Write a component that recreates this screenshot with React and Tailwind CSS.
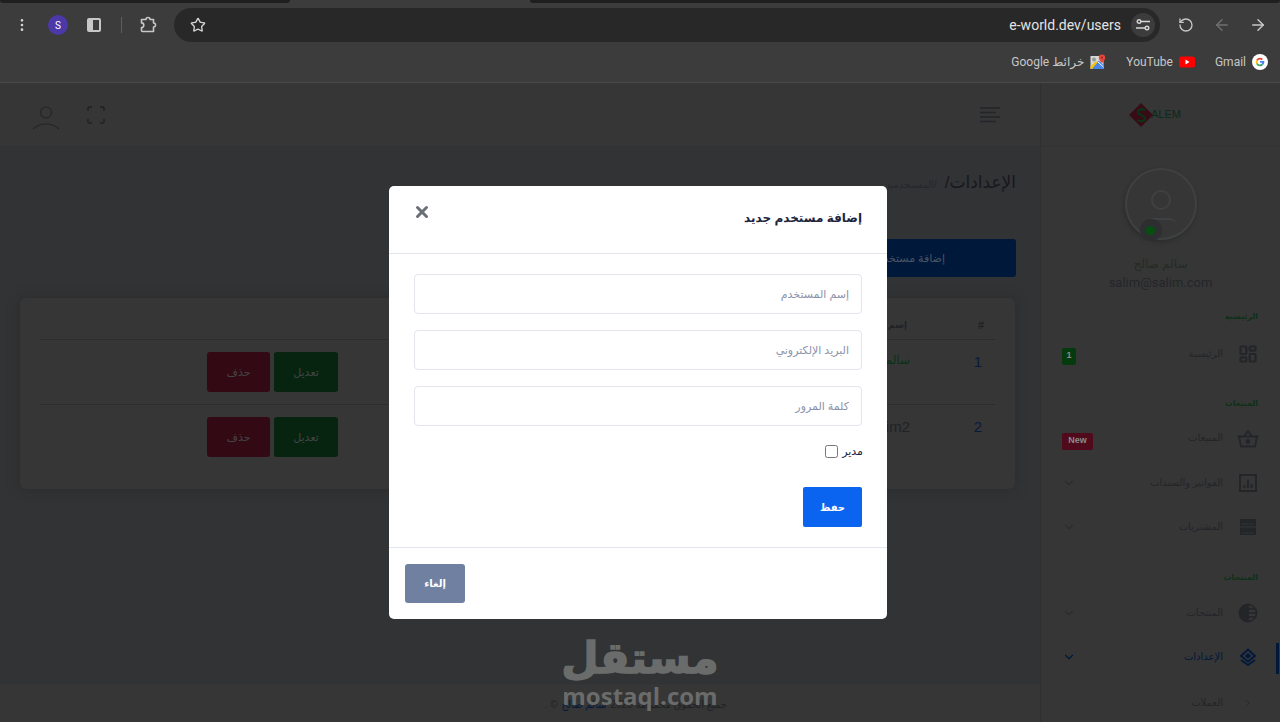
import {
    ArrowLeft,
    ArrowRight,
    ChevronDown,
    ChevronRight,
    EllipsisVertical,
    LayoutDashboard,
    RotateCcw,
    Star,
    X,
} from "lucide-react";

const ChromeBtn = ({ children }) => (
    <div className="w-9 h-9 flex items-center justify-center shrink-0">{children}</div>
);

const SidePanelIcon = () => (
    <svg width="16" height="16" viewBox="0 0 16 16">
        <rect x="1" y="1" width="14" height="14" rx="2" fill="#c7c7c7" />
        <rect x="7" y="3" width="6" height="10" fill="#3c3c3c" />
    </svg>
);

const PuzzleIcon = () => (
    <svg width="18" height="18" viewBox="0 0 18 18" fill="none" stroke="#c7c7c7" strokeWidth="1.6" strokeLinejoin="round">
        <path d="M2.500 3.500H7a2 2 0 0 1 4 0h3.500V7a2 2 0 0 1 0 4v4.500H3.500a1 1 0 0 1-1-1V11.500a2.300 2.300 0 0 0 0-4.600z" />
    </svg>
);

const TuneIcon = () => (
    <svg width="14" height="12" viewBox="0 0 14 12" fill="none" stroke="#d5d5d5" strokeWidth="1.4">
        <circle cx="3" cy="2.500" r="1.800" />
        <path d="M5 2.500h9M0 9h9" />
        <circle cx="11" cy="9" r="1.800" />
    </svg>
);

const GoogleIcon = () => (
    <svg width="16" height="16" viewBox="0 0 16 16">
        <circle cx="8" cy="8" r="8" fill="#fff" />
        <path d="M5 6.400A3.400 3.400 0 0 1 8 4.600a3.400 3.400 0 0 1 2.300.9" stroke="#ea4335" strokeWidth="1.800" fill="none" />
        <path d="M5 9.600a3.400 3.400 0 0 1 0-3.200" stroke="#fbbc05" strokeWidth="1.800" fill="none" />
        <path d="M10.400 10.400A3.400 3.400 0 0 1 5 9.600" stroke="#34a853" strokeWidth="1.800" fill="none" />
        <path d="M8 7.900h3.400a3.400 3.400 0 0 1-1 2.500" stroke="#4285f4" strokeWidth="1.800" fill="none" />
    </svg>
);

const YoutubeIcon = () => (
    <svg width="16" height="12" viewBox="0 0 16 12">
        <rect width="16" height="11" y="0.500" rx="2.500" fill="#ff0000" />
        <path d="M6.500 3.500 10.500 6l-4 2.500z" fill="#fff" />
    </svg>
);

const MapsIcon = () => (
    <svg width="16" height="16" viewBox="0 0 16 16">
        <rect x="0.500" y="2" width="13" height="13" fill="#d8d8d0" />
        <path d="M0.500 15 9 6.500l4.500 4.500V15z" fill="#4a86e8" />
        <path d="M0.500 12.500 6 7 7.500 8.500 2 15H0.500z" fill="#f4c20d" />
        <path d="M8 8 13.500 13" stroke="#fff" strokeWidth="1" />
        <circle cx="4" cy="5.500" r="2" fill="#8f9aa0" />
        <path d="M12 0.500a3.200 3.200 0 0 1 3.200 3.200C15.200 6 12 9 12 9S8.800 6 8.800 3.700A3.200 3.200 0 0 1 12 .5z" fill="#e8453c" />
        <circle cx="12" cy="3.700" r="1.100" fill="#9c2b25" />
    </svg>
);

const Bookmark = ({ icon, label }) => (
    <div className="flex items-center gap-[6px] text-[12px] text-[#c7c7c7] font-['Roboto','DejaVu_Sans',sans-serif]">
        {icon}
        <span>{label}</span>
    </div>
);

const BrowserBar = () => (
    <div className="bg-[#3c3c3c] h-[83px] border-b border-[#4a4a4a] shrink-0 flex flex-col">
        <div className="flex h-[3px]" dir="ltr">
            <div className="w-[290px] bg-[#1f1f1f] rounded-b-md" />
            <div className="w-[240px]" />
            <div className="flex-1 bg-[#1f1f1f] rounded-b-md" />
        </div>
        <div className="flex items-center h-[44px] px-1">
            <ChromeBtn><ArrowRight size={18} color="#c7c7c7" /></ChromeBtn>
            <ChromeBtn><ArrowLeft size={18} color="#6f6f6f" /></ChromeBtn>
            <ChromeBtn><RotateCcw size={16} color="#c7c7c7" /></ChromeBtn>
            <div className="w-[986px] h-[34px] mx-2 rounded-full bg-[#282828] flex items-center shrink-0">
                <div className="w-[24px] h-[24px] mr-[5px] rounded-full bg-[#3c3c3c] flex items-center justify-center">
                    <TuneIcon />
                </div>
                <span dir="ltr" className="mr-[10px] text-[14px] text-[#e3e3e3] font-['Roboto',sans-serif]">e-world.dev/users</span>
                <Star size={16} color="#d5d5d5" strokeWidth={2} className="mr-auto ml-[16px]" />
            </div>
            <ChromeBtn><PuzzleIcon /></ChromeBtn>
            <div className="w-[18px] flex justify-center"><div className="w-px h-4 bg-[#5e5e5e]" /></div>
            <ChromeBtn><SidePanelIcon /></ChromeBtn>
            <ChromeBtn>
                <div className="w-5 h-5 rounded-full bg-[#4c38a8] text-white text-[10px] flex items-center justify-center font-['Roboto',sans-serif]">S</div>
            </ChromeBtn>
            <ChromeBtn><EllipsisVertical size={16} color="#d5d5d5" /></ChromeBtn>
        </div>
        <div className="flex items-center gap-5 pr-[12px] h-[30px]">
            <Bookmark icon={<GoogleIcon />} label="Gmail" />
            <Bookmark icon={<YoutubeIcon />} label="YouTube" />
            <Bookmark icon={<MapsIcon />} label="خرائط Google" />
        </div>
    </div>
);

const BasicIcon = ({ type }) => {
    if (type === "dashboard") return <LayoutDashboard size={20} color="#232529" strokeWidth={2.6} />;
    if (type === "basket")
        return (
            <svg width="22" height="18" viewBox="0 0 22 18" fill="none" stroke="#232529" strokeWidth="1.800" strokeLinejoin="round" className="translate-y-px">
                <path d="M7 6.500 11 1l4 5.500" />
                <path d="M0.500 6.500h21" />
                <path d="M2 6.500 4 16.500h14l2-10" />
                <circle cx="11" cy="11.500" r="1.500" fill="#232529" />
            </svg>
        );
    if (type === "server")
        return (
            <svg width="18" height="18" viewBox="0 0 18 18">
                <rect x="1" y="1" width="16" height="7.500" fill="#232529" />
                <rect x="1" y="9.500" width="16" height="7.500" fill="#232529" />
                <path d="M3 6h12M3 15h12" stroke="#3a3b3c" strokeWidth="1" strokeDasharray="1.500 1" />
            </svg>
        );
    if (type === "layers")
        return (
            <svg width="18" height="18" viewBox="0 0 18 18" fill="none" stroke="#00183a" strokeWidth="1.800">
                <path d="M9 1.500 16 8l-7 5.500L2 8z" />
                <path d="M2 12l7 5 7-5" />
                <path d="M9 5 12.500 8 9 10.500 5.500 8z" fill="#00183a" stroke="none" />
            </svg>
        );
    if (type === "chart")
        return (
            <svg width="18" height="18" viewBox="0 0 18 18" fill="none" stroke="#232529" strokeWidth="2">
                <rect x="1" y="1" width="16" height="16" />
                <path d="M5.500 14v-3M9 14V5.500M12.500 14v-4" />
            </svg>
        );
    if (type === "globe")
        return (
            <svg width="20" height="20" viewBox="0 0 20 20" fill="none" stroke="#232529" strokeWidth="1.600">
                <circle cx="10" cy="10" r="8.500" />
                <path d="M10 1.500a8.500 8.500 0 0 0 0 17z" fill="#232529" />
                <path d="M10 6h7M10 10h8M10 14h7" />
            </svg>
        );
    return <ChevronRight size={10} color="#232529" />;
};

const sideGroups = [
    {
        title: "الرئيسية",
        top: "mt-[16px]",
        rowsTop: "mt-[6px]",
        items: [{ label: "الرئيسية", icon: "dashboard", badge: "1", badgeClass: "bg-[#053a0e] w-[14px] translate-y-[3px]" }],
    },
    {
        title: "المبيعات",
        top: "mt-[21px]",
        rowsTop: "mt-[3px]",
        items: [
            { label: "المبيعات", icon: "basket", badge: "New", badgeClass: "bg-[#500a1c] w-[31px] translate-y-[4px]" },
            { label: "الفواتير والسندات", icon: "chart", arrow: true, nudge: true },
            { label: "المشتريات", icon: "server", arrow: true },
        ],
    },
    {
        title: "المنتجات",
        top: "mt-[22px]",
        rowsTop: "mt-[4px]",
        items: [
            { label: "المنتجات", icon: "globe", arrow: true },
            { label: "الإعدادات", icon: "layers", arrow: true, active: true },
            { label: "العملات", icon: "sub", sub: true },
        ],
    },
];

const SideRow = ({ item }) => (
    <div className={`relative flex items-center h-11 pr-5 pl-[21px] ${item.sub ? "mt-[2px]" : ""} ${item.nudge ? "mt-px" : ""}`}>
        <div className="w-6 flex justify-center shrink-0 translate-y-px">
            <BasicIcon type={item.icon} />
        </div>
        <span className={`mr-[13px] text-[10px] ${item.active ? "text-[#00183a]" : "text-[#232529]"}`}>{item.label}</span>
        {item.badge && (
            <span className={`mr-auto h-[17px] rounded-[2px] text-[#8a8a8a] text-[9px] font-bold flex items-center justify-center font-['Liberation_Sans',sans-serif] ${item.badgeClass}`}>
                {item.badge}
            </span>
        )}
        {item.arrow && (
            <ChevronDown size={14} color={item.active ? "#00183a" : "#2b2c2f"} className="mr-auto translate-y-px" />
        )}
        {item.active && <div className="absolute right-[1px] top-[9px] w-[3px] h-[31px] bg-[#00183a]" />}
    </div>
);

const Sidebar = () => (
    <aside className="w-[240px] shrink-0 bg-[#363636] border-l border-[#2f3032] flex flex-col h-[650px]">
        <div className="h-16 shrink-0 flex items-center justify-center border-b border-[#313234] pr-[12px]" dir="ltr">
            <svg width="26" height="26" viewBox="0 0 26 26" className="-mr-[3px]">
                <path d="M13 1 25 13 13 25 1 13z" fill="#380c16" />
                <path d="M17 8.500c-1-1.500-7-2-7 1.500s7 3 7 6.500-6 3-7.500 1.500" fill="none" stroke="#0a3318" strokeWidth="2.200" />
            </svg>
            <span className="text-[11px] text-[#0a2a1a] font-['Liberation_Sans',sans-serif]">ALEM</span>
        </div>
        <div className="mt-[21px] flex flex-col items-center">
            <div className="relative w-[72px] h-[72px] rounded-full border-2 border-[#3f4041] shadow-[-1px_2px_4px_#2a2b2c] flex flex-col items-center">
                <div className="mt-[20px] w-5 h-5 rounded-full border-2 border-[#3f4041]" />
                <div className="mt-[8px] w-[32px] h-[8px] rounded-t-full border-t-2 border-[#3f4041]" />
                <div className="absolute bottom-[-3px] right-[33px] w-[22px] h-[22px] rounded-full bg-[#2d2e30] flex items-center justify-center">
                    <div className="w-[9px] h-[9px] rounded-full bg-[#06500f]" />
                </div>
            </div>
            <div className="mt-[15px] text-[12px] leading-[18px] text-[#232b25]">سالم صالح</div>
            <div className="text-[13px] leading-[20px] text-[#24262a] font-['Roboto',sans-serif]">salim@salim.com</div>
        </div>
        {sideGroups.map((group) => (
            <div key={group.title}>
                <div className={`${group.top} pr-[22px] h-4 leading-4 text-[8px] font-bold text-[#0f3018]`}>{group.title}</div>
                <div className={group.rowsTop}>
                    {group.items.map((item) => (
                        <SideRow key={item.label} item={item} />
                    ))}
                </div>
            </div>
        ))}
    </aside>
);

const TopBar = () => (
    <div className="h-16 shrink-0 bg-[#363636] border-b border-[#313234] flex items-center pr-[40px] pl-[32px]">
        <svg width="20" height="16" viewBox="0 0 20 16" stroke="#232529" strokeWidth="1.300">
            <path d="M0 1h20M0 5.500h16M0 10h20M0 14.500h16" />
        </svg>
        <div className="mr-auto flex items-center gap-[27px]">
            <svg width="18" height="18" viewBox="0 0 18 18" fill="none" stroke="#232529" strokeWidth="1.800">
                <path d="M1 5V2.500A1.500 1.500 0 0 1 2.500 1H5M13 1h2.500A1.500 1.500 0 0 1 17 2.500V5M17 13v2.500a1.500 1.500 0 0 1-1.500 1.500H13M5 17H2.500A1.500 1.500 0 0 1 1 15.500V13" />
            </svg>
            <svg width="28" height="24" viewBox="0 0 28 24" fill="none" stroke="#232529" strokeWidth="1.100" className="mt-[6px]">
                <circle cx="14" cy="6.500" r="5.500" />
                <path d="M1 23c3-3 8-5 13-5s10 2 13 5" />
            </svg>
        </div>
    </div>
);

const UserRow = ({ num, name, nameClass }) => (
    <div className="grid grid-cols-[85px_572px_1fr] h-[65px] border-t border-[#2c2d2f]">
        <div className="pr-[13px] pt-[11px] text-[15px] text-[#0a1a3c] font-['Liberation_Sans',sans-serif]">{num}</div>
        <div className={`pt-[11px] ${nameClass}`}>{name}</div>
        <div className="flex gap-1 pt-[12px] text-[11px] text-[#434445]">
            <button className="w-16 h-10 rounded-[3px] bg-[#06240f]">تعديل</button>
            <button className="w-[63px] h-10 rounded-[3px] bg-[#330a14]">حذف</button>
        </div>
    </div>
);

const UsersCard = () => (
    <div className="mt-[21px] h-[191px] rounded-md bg-[#363636] shadow-[0_0_12px_#2a2b2d] px-5 ml-[20px] mr-px">
        <div className="grid grid-cols-[85px_1fr] h-[41px] pt-[14px] items-center text-[9px] font-bold text-[#202225]">
            <div className="pr-[11px] font-['Liberation_Sans',sans-serif] text-[11px]">#</div>
            <div className="pr-[3px]">إسم المستخدم</div>
        </div>
        <UserRow num="1" name="سالم صالح" nameClass="text-[12px] text-[#0a3018]" />
        <UserRow num="2" name="salim2" nameClass="text-[15px] text-[#202225] font-['Liberation_Sans',sans-serif]" />
    </div>
);

const Footer = () => (
    <div className="h-[39px] shrink-0 bg-[#363636] border-t border-[#313234] flex items-center pr-[313px] pt-[2px] text-[10px] text-[#202225]">
        جميع الحقوق محفوظة 2023 <span className="text-[#00183a] mx-1">سالم صالح</span> © .
    </div>
);

const Field = ({ placeholder, type = "text" }) => (
    <input
        type={type}
        placeholder={placeholder}
        className="block w-full h-10 px-3 border border-[#e3e6ef] rounded-[4px] text-[11px] placeholder:text-[#8b93ab] outline-none"
    />
);

const UserModal = () => (
    <div className="absolute left-[389px] top-[186px] w-[498px] h-[433px] bg-white rounded-[5px] flex flex-col">
        <div className="h-[68px] shrink-0 border-b border-[#e3e6ef] flex items-start justify-between pr-[25px] pl-[24px]">
            <h5 className="mt-[23px] text-[12px] font-bold text-[#1c2540]">إضافة مستخدم جديد</h5>
            <X size={18} color="#6b7078" strokeWidth={4} className="mt-[17px]" />
        </div>
        <div className="h-[294px] shrink-0 border-b border-[#e3e6ef] px-[25px] pt-[20px]">
            <div className="flex flex-col gap-4">
                <Field placeholder="إسم المستخدم" />
                <Field placeholder="البريد الإلكتروني" type="email" />
                <Field placeholder="كلمة المرور" type="password" />
            </div>
            <label className="mt-[17px] -mr-px flex items-center gap-[4px] h-[16px] text-[11px] text-[#1c2540]">
                مدير
                <input type="checkbox" className="w-[13px] h-[13px] m-0" />
            </label>
            <button className="mt-[28px] block w-[59px] h-10 rounded-[2px] bg-[#0a64f0] text-white text-[10px] font-bold">حفظ</button>
        </div>
        <div className="flex-1 flex items-start justify-end pl-[16px] pt-[16px]">
            <button className="w-[60px] h-[39px] rounded-[3px] bg-[#7080a0] text-white text-[10px] font-bold">إلغاء</button>
        </div>
    </div>
);

const Watermark = () => (
    <div className="absolute left-[563px] top-[628px] w-[154px] flex flex-col items-center text-[#6a6c6b] pointer-events-none">
        <div className="text-[43px] leading-[60px] font-bold whitespace-nowrap [-webkit-text-stroke:1.5px_#6a6c6b]">مستقل</div>
        <div dir="ltr" className="-mt-[5px] text-[24px] leading-[26px] font-bold whitespace-nowrap font-['Open_Sans',sans-serif]">mostaql.com</div>
    </div>
);

export default function App() {
    return (
        <div dir="rtl" className="relative w-[1280px] h-[722px] overflow-hidden bg-[#323335] flex flex-col font-['Liberation_Sans','DejaVu_Sans',sans-serif]">
            <BrowserBar />
            <div className="flex flex-1 min-h-0">
                <Sidebar />
                <main className="flex-1 flex flex-col min-w-0">
                    <TopBar />
                    <div className="flex-1 pr-6 pt-[23px]">
                        <div className="flex items-baseline h-7 text-[#16181c]">
                            <span className="text-[17px]">الإعدادات/</span>
                            <span className="mr-[8px] text-[10px] text-[#25272b]">/المستخدمين</span>
                        </div>
                        <button className="block mt-[41px] w-[222px] h-[38px] rounded-[3px] bg-[#00183a] text-[11px] text-[#4a5564] text-right pr-[71px]">
                            إضافة مستخدم
                        </button>
                        <UsersCard />
                    </div>
                    <Footer />
                </main>
            </div>
            <UserModal />
            <Watermark />
        </div>
    );
}
